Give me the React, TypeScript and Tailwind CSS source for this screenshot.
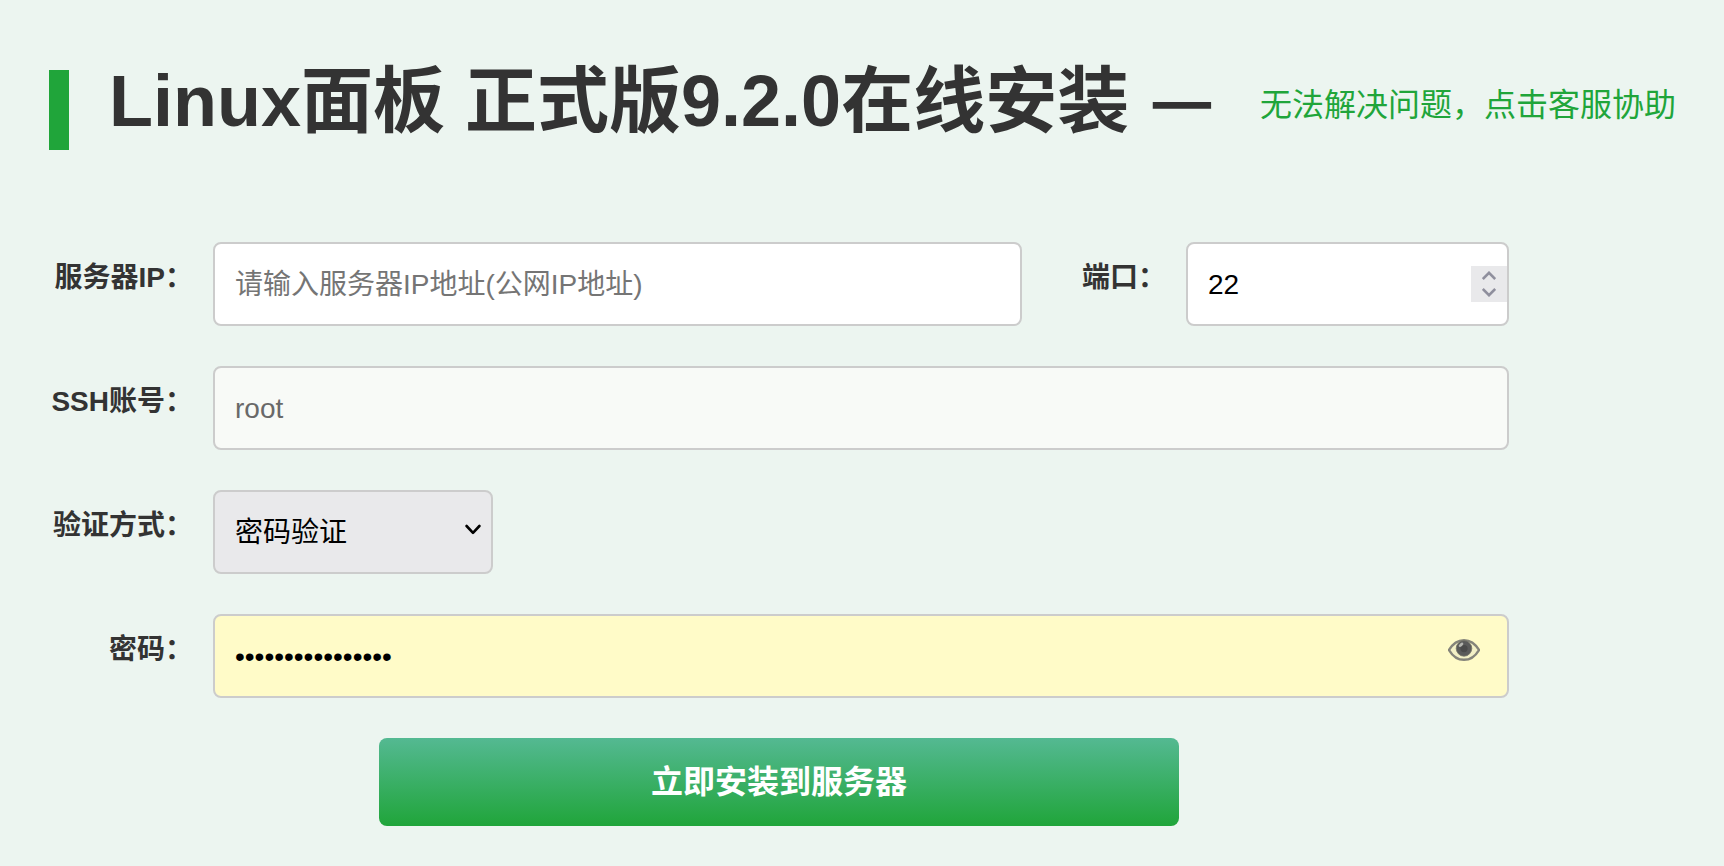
import { useState } from 'react';
import type { FormEvent } from 'react';

const labelClass = 'w-36 shrink-0 mr-5 pt-4 text-right text-[28px] leading-[40px] font-bold whitespace-nowrap';
const fieldClass = 'h-[84px] rounded-lg border-2 border-[#cccccc] px-5 pt-0.5 text-[28px] outline-none';

export default function App() {
  const [ip, setIp] = useState('');
  const [port, setPort] = useState(22);
  const [authType, setAuthType] = useState('password');
  const [password, setPassword] = useState('abcdefgh12345678');
  const [showPassword, setShowPassword] = useState(false);

  const handleSubmit = (e: FormEvent) => {
    e.preventDefault();
  };

  return (
    <main className="min-h-screen bg-[#ecf5f0] pl-[49px] pr-12 pt-[50px] pb-10 font-['Liberation_Sans','Noto_Sans_CJK_SC',sans-serif] text-[#333333]">
      {/* Header */}
      <header className="flex items-center justify-between h-[100px] whitespace-nowrap">
        <div className="flex items-center">
          <div className="w-5 h-20 mt-5 mr-10 bg-[#20a53a]" />
          <h1 className="pt-0.5 text-[72px] leading-[100px] font-bold">
            Linux面板 正式版9.2.0在线安装{' '}
            <span className="leading-none font-['Noto_Sans_CJK_SC',sans-serif]">—</span>
          </h1>
        </div>
        <a href="#support" className="pt-2.5 text-[32px] leading-[40px] text-[#20a53a]">
          无法解决问题，点击客服协助
        </a>
      </header>

      {/* Install form */}
      <form onSubmit={handleSubmit} className="flex flex-col gap-10 max-w-[1460px] mt-[92px]">
        <div className="flex">
          <label htmlFor="ip" className={labelClass}>服务器IP：</label>
          <input
            id="ip"
            type="text"
            value={ip}
            onChange={(e) => setIp(e.target.value)}
            placeholder="请输入服务器IP地址(公网IP地址)"
            className={`${fieldClass} flex-1 min-w-0 bg-white text-black placeholder:text-[#757575]`}
          />
          <label htmlFor="port" className={labelClass}>端口：</label>
          <div className="relative w-[323px]">
            <input
              id="port"
              type="number"
              value={port}
              onChange={(e) => setPort(Number(e.target.value))}
              className={`${fieldClass} w-full bg-white text-black [appearance:textfield] [&::-webkit-inner-spin-button]:appearance-none`}
            />
            <div className="absolute right-0.5 top-6 flex flex-col w-9 h-9 bg-[#e9e9eb] text-[#8f8f9d]">
              <button
                type="button"
                aria-label="增加"
                onClick={() => setPort(port + 1)}
                className="flex flex-1 items-end justify-center pb-1"
              >
                <svg width="14" height="9" viewBox="0 0 14 9" fill="none" stroke="currentColor" strokeWidth="2.6">
                  <path d="M0.8 8 7 1.8 13.2 8" />
                </svg>
              </button>
              <button
                type="button"
                aria-label="减少"
                onClick={() => setPort(port - 1)}
                className="flex flex-1 items-start justify-center pt-1"
              >
                <svg width="14" height="9" viewBox="0 0 14 9" fill="none" stroke="currentColor" strokeWidth="2.6">
                  <path d="M0.8 1 7 7.2 13.2 1" />
                </svg>
              </button>
            </div>
          </div>
        </div>

        <div className="flex">
          <label htmlFor="user" className={labelClass}>SSH账号：</label>
          <input
            id="user"
            type="text"
            value="root"
            disabled
            className={`${fieldClass} flex-1 min-w-0 bg-[#f8faf7] text-[#696969]`}
          />
        </div>

        <div className="flex">
          <label htmlFor="auth" className={labelClass}>验证方式：</label>
          <div className="relative w-[280px]">
            <select
              id="auth"
              value={authType}
              onChange={(e) => setAuthType(e.target.value)}
              className={`${fieldClass} w-full appearance-none bg-[#e9e9eb] text-black`}
            >
              <option value="password">密码验证</option>
              <option value="key">密钥验证</option>
            </select>
            <svg
              className="absolute right-3 top-[34px] pointer-events-none text-black"
              width="16"
              height="11"
              viewBox="0 0 16 11"
              fill="none"
              stroke="currentColor"
              strokeWidth="2.6"
              strokeLinecap="round"
              strokeLinejoin="round"
            >
              <path d="M1.6 2 8 8.8 14.4 2" />
            </svg>
          </div>
        </div>

        <div className="flex">
          <label htmlFor="password" className={labelClass}>密码：</label>
          <div className="relative flex-1 min-w-0">
            <input
              id="password"
              type={showPassword ? 'text' : 'password'}
              value={password}
              onChange={(e) => setPassword(e.target.value)}
              className={`${fieldClass} w-full bg-[#fffbc8] text-black`}
            />
            <button
              type="button"
              aria-label="显示密码"
              onClick={() => setShowPassword(!showPassword)}
              className="absolute right-[29px] top-6"
            >
              <svg width="32" height="24" viewBox="0 0 32 24" fill="none">
                <path
                  d="M1 12C5 5.3 10 2.2 16 2.2s11 3.1 15 9.8c-4 6.7-9 9.8-15 9.8S5 18.7 1 12Z"
                  fill="#f3f0c6"
                  stroke="#85847a"
                  strokeWidth="2.4"
                />
                <circle cx="16" cy="10.4" r="7.8" fill="#5a5a5a" stroke="#77766a" strokeWidth="0.8" />
                <circle cx="16" cy="10.6" r="3.6" fill="#4a4a4a" />
                <ellipse cx="13" cy="6.8" rx="2.8" ry="1.5" transform="rotate(-40 13 6.8)" fill="#b4b4ae" />
              </svg>
            </button>
          </div>
        </div>

        <button
          type="submit"
          className="w-full max-w-[800px] h-[88px] self-center rounded-lg bg-linear-to-b/srgb from-[#54b992] to-[#20a53a] text-[32px] font-bold text-white"
        >
          立即安装到服务器
        </button>
      </form>
    </main>
  );
}
